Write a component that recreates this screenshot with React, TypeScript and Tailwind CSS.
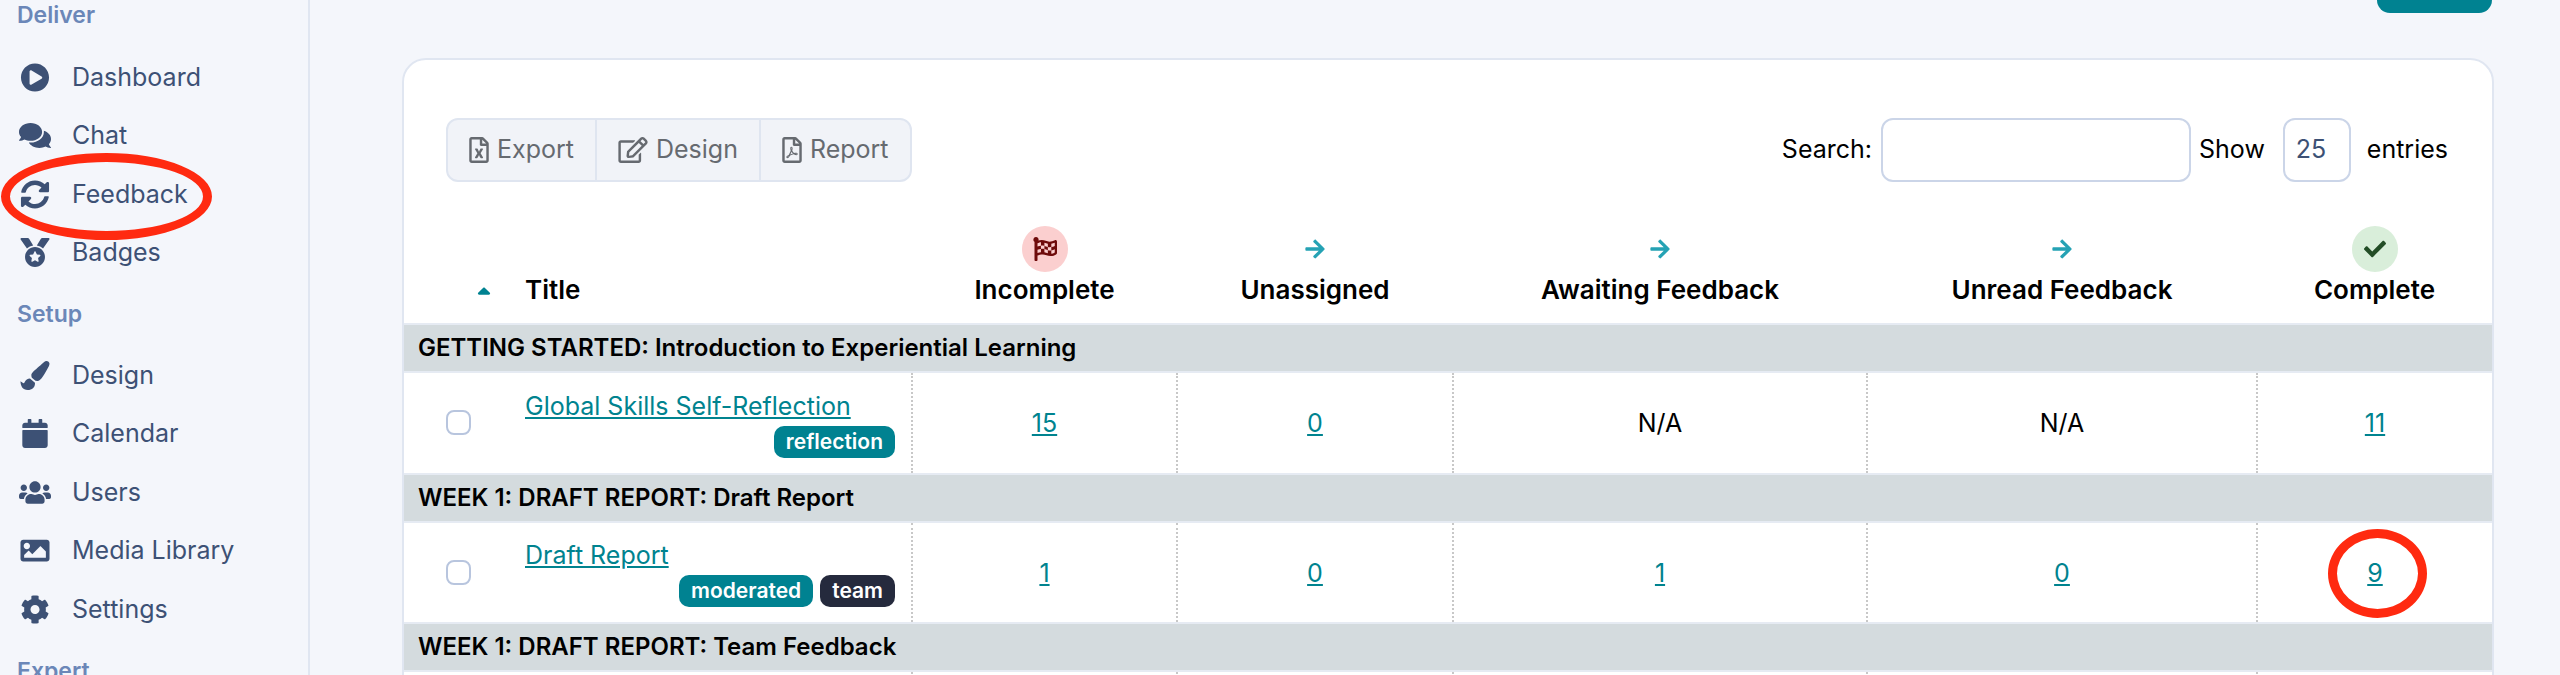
import React from "react";
import {
  FaArrowRight,
  FaCalendar,
  FaCheck,
  FaCog,
  FaComments,
  FaFlagCheckered,
  FaImage,
  FaMedal,
  FaPaintBrush,
  FaPlayCircle,
  FaRegEdit,
  FaRegFileExcel,
  FaRegFilePdf,
  FaSortUp,
  FaSyncAlt,
  FaUsers,
} from "react-icons/fa";

const deliver = [
  { label: "Dashboard", icon: FaPlayCircle },
  { label: "Chat", icon: FaComments },
  { label: "Feedback", icon: FaSyncAlt },
  { label: "Badges", icon: FaMedal },
];

const setup = [
  { label: "Design", icon: FaPaintBrush },
  { label: "Calendar", icon: FaCalendar },
  { label: "Users", icon: FaUsers },
  { label: "Media Library", icon: FaImage },
  { label: "Settings", icon: FaCog },
];

const NavItem = ({ label, icon: Icon }: { label: string; icon: React.ComponentType<{ className?: string }> }) => (
  <a className="flex h-[58.5px] items-center text-[25px] text-[#3d5175]">
    <span className="flex w-[72px] justify-center">
      <Icon className="ml-[-2px] h-[29px] w-[32px]" />
    </span>
    {label}
  </a>
);

const Heading = ({ children, className }: { children: React.ReactNode; className: string }) => (
  <h6 className={`h-[30px] pl-[17px] text-[23px] leading-[30px] font-semibold text-[#6b87b8] ${className}`}>{children}</h6>
);

const Sidebar = () => (
  <aside className="h-[675px] w-[310px] shrink-0 border-r-2 border-[#e0e6f1]">
    <Heading className="mb-[18px]">Deliver</Heading>
    {deliver.map((item) => (
      <NavItem key={item.label} {...item} />
    ))}
    <Heading className="mt-[17px] mb-[17px]">Setup</Heading>
    {setup.map((item) => (
      <NavItem key={item.label} {...item} />
    ))}
    <Heading className="mt-[17px]">Expert</Heading>
  </aside>
);

const Toolbar = () => (
  <div className="flex h-[64px] items-center justify-between pr-[44px] pl-[42px] text-[25px]">
    <div className="flex h-[64px] rounded-xl border-2 border-[#dfe5f0] bg-[#f1f3f8] text-[#666a70]">
      <button className="flex items-center gap-[8px] px-[21px]">
        <FaRegFileExcel className="h-[26px] w-[20px]" /> Export
      </button>
      <button className="flex items-center gap-[8px] border-l-2 border-[#dfe5f0] px-[21px]">
        <FaRegEdit className="h-[26px] w-[30px]" /> Design
      </button>
      <button className="flex items-center gap-[8px] border-l-2 border-[#dfe5f0] px-[21px]">
        <FaRegFilePdf className="h-[26px] w-[20px]" /> Report
      </button>
    </div>
    <div className="flex items-center text-black">
      <label>Search:</label>
      <input className="mr-[8px] ml-[9px] h-[64px] w-[310px] rounded-xl border-2 border-[#cbd5e8] bg-white" />
      <span>Show</span>
      <select className="mr-[16px] ml-[18px] h-[64px] w-[68px] appearance-none rounded-xl border-2 border-[#cbd5e8] bg-white pl-[11px] text-[#3d5175]">
        <option>25</option>
      </select>
      <span>entries</span>
    </div>
  </div>
);

const TealArrow = () => (
  <div className="flex h-[46px] items-center justify-center">
    <FaArrowRight className="h-[22px] w-[22px] text-[#25a2b4]" />
  </div>
);

const Tag = ({ children, dark }: { children: React.ReactNode; dark?: boolean }) => (
  <span className={`rounded-[10px] px-[12px] text-[21px] leading-[32px] font-semibold text-white ${dark ? "bg-[#252a3d]" : "bg-[#008291]"}`}>
    {children}
  </span>
);

const GroupRow = ({ children }: { children: React.ReactNode }) => (
  <tr className="h-[48px] border-y-2 border-[#e6ebf3] bg-[#d4dbde]">
    <td colSpan={7} className="pl-[14px] text-[24px] font-semibold text-black">
      {children}
    </td>
  </tr>
);

const Count = ({ value }: { value: string }) => <a className="text-[#00838f] underline underline-offset-2">{value}</a>;

const Cell = ({ children, last }: { children?: React.ReactNode; last?: boolean }) => (
  <td className={`pt-[2px] text-center ${last ? "" : "border-r-2 border-dotted border-[#c8c8c8]"}`}>{children}</td>
);

const DataRow = ({ title, tags, counts }: { title: string; tags: React.ReactNode; counts: React.ReactNode[] }) => (
  <tr className="h-[101.5px]">
    <td className="pl-[42px]">
      <input type="checkbox" className="block h-[25px] w-[25px] appearance-none rounded-lg border-2 border-[#b8c5de] bg-white" />
    </td>
    <td className="border-r-2 border-dotted border-[#c8c8c8] pt-[3px] pr-[16px] pl-[15px]">
      <a className="block leading-[30px] text-[#00838f] underline underline-offset-2">{title}</a>
      <div className="mt-[5px] flex justify-end gap-[7px]">{tags}</div>
    </td>
    {counts.map((count, i) => (
      <Cell key={i} last={i === counts.length - 1}>
        {count}
      </Cell>
    ))}
  </tr>
);

const FeedbackTable = () => (
  <table className="w-full table-fixed border-collapse text-[25px] text-black">
    <colgroup>
      <col className="w-[106px]" />
      <col className="w-[402px]" />
      <col className="w-[265px]" />
      <col className="w-[276px]" />
      <col className="w-[414px]" />
      <col className="w-[390px]" />
      <col className="w-[235px]" />
    </colgroup>
    <thead>
      <tr className="h-[142px] align-bottom text-[26px] leading-[36px]">
        <th className="pr-[19px] pb-[16px] text-right">
          <FaSortUp className="ml-auto h-[22px] w-[14px] text-[#008291]" />
        </th>
        <th className="pb-[15px] pl-[15px] text-left font-semibold">Title</th>
        <th className="pb-[15px] font-semibold">
          <div className="flex h-[46px] items-center justify-center">
            <span className="flex h-[46px] w-[46px] items-center justify-center rounded-full bg-[#fbcfcf]">
              <FaFlagCheckered className="h-[24px] w-[24px] text-[#6e0b0b]" />
            </span>
          </div>
          Incomplete
        </th>
        <th className="pb-[15px] font-semibold">
          <TealArrow />
          Unassigned
        </th>
        <th className="pb-[15px] font-semibold">
          <TealArrow />
          Awaiting Feedback
        </th>
        <th className="pb-[15px] font-semibold">
          <TealArrow />
          Unread Feedback
        </th>
        <th className="pb-[15px] font-semibold">
          <div className="flex h-[46px] items-center justify-center">
            <span className="flex h-[46px] w-[46px] items-center justify-center rounded-full bg-[#d9eeda]">
              <FaCheck className="h-[22px] w-[22px] text-[#234d26]" />
            </span>
          </div>
          Complete
        </th>
      </tr>
    </thead>
    <tbody>
      <GroupRow>GETTING STARTED: Introduction to Experiential Learning</GroupRow>
      <DataRow
        title="Global Skills Self-Reflection"
        tags={<Tag>reflection</Tag>}
        counts={[<Count value="15" />, <Count value="0" />, "N/A", "N/A", <Count value="11" />]}
      />
      <GroupRow>WEEK 1: DRAFT REPORT: Draft Report</GroupRow>
      <DataRow
        title="Draft Report"
        tags={
          <>
            <Tag>moderated</Tag>
            <Tag dark>team</Tag>
          </>
        }
        counts={[<Count value="1" />, <Count value="0" />, <Count value="1" />, <Count value="0" />, <Count value="9" />]}
      />
      <GroupRow>WEEK 1: DRAFT REPORT: Team Feedback</GroupRow>
      <DataRow title="" tags={null} counts={["", "", "", "", ""]} />
    </tbody>
  </table>
);

export default function App() {
  return (
    <div className="relative flex h-[675px] overflow-hidden bg-[#f4f6fb] font-['Inter',sans-serif]">
      <Sidebar />
      <main className="flex-1">
        <div className="mr-[68px] ml-auto h-[13px] w-[115px] rounded-b-[13px] bg-[#008291]" />
        <section className="mt-[45px] mr-[66px] ml-[92px] rounded-t-[24px] border-2 border-[#e0e6f1] bg-white pt-[58px]">
          <Toolbar />
          <FeedbackTable />
        </section>
      </main>

      {/* red marker annotations drawn over the page */}
      <span className="absolute top-[153px] left-[1px] h-[87px] w-[211px] rounded-[50%] border-[9px] border-[#ff2a10]" />
      <span className="absolute top-[529px] left-[2328px] h-[89px] w-[99px] rounded-[50%] border-[9px] border-[#ff2a10]" />
    </div>
  );
}
